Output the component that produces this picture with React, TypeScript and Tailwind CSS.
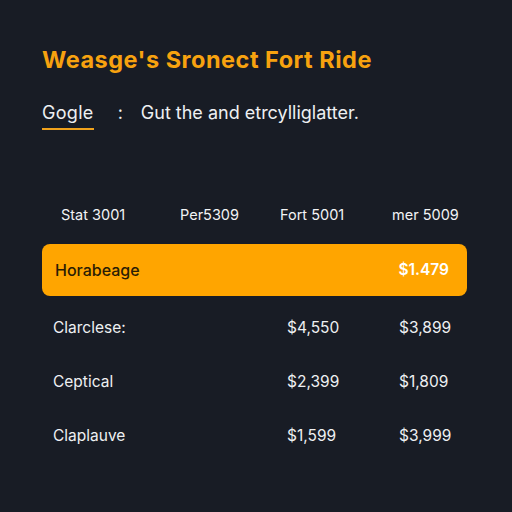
import React from "react";

const rows = [
  { name: "Clarclese:", a: "$4,550", b: "$3,899" },
  { name: "Ceptical", a: "$2,399", b: "$1,809" },
  { name: "Claplauve", a: "$1,599", b: "$3,999" },
];

export default function App() {
  return (
    <div
      className="w-[512px] h-[512px] bg-[#181c25] text-white overflow-hidden"
      style={{ fontFamily: "Inter, 'Noto Sans', sans-serif" }}
    >
      <div className="pt-[45px] px-[42px]">
        <h1 className="text-[23.5px] font-bold text-[#f7a20f] leading-[30px] tracking-[0.5px] whitespace-nowrap">
          Weasge's Sronect Fort Ride
        </h1>
        <div className="mt-[26px] flex items-center text-[18px] leading-[24px] text-[#eef0f2]">
          <span className="border-b-2 border-[#f0a21c] pb-[3px] tracking-[0.3px]">Gogle</span>
          <span className="ml-[24px] pb-[5px]">:</span>
          <span className="ml-[18px] pb-[5px]">Gut the and etrcylliglatter.</span>
        </div>
      </div>

      <div className="mt-[75px] px-[42px]">
        <div className="grid grid-cols-[119px_100px_112px_1fr] text-[14.5px] leading-[20px] text-[#f2f3f5] pl-[19px] whitespace-nowrap">
          <span>Stat 3001</span>
          <span>Per5309</span>
          <span>Fort 5001</span>
          <span>mer 5009</span>
        </div>
        <div className="mt-[19px] mr-[3px] h-[52px] rounded-[8px] bg-[#ffa500] flex items-center justify-between pl-[13px] pr-[18px]">
          <span className="text-[16px] font-medium text-[#2a1d05]">Horabeage</span>
          <span className="text-[15.5px] font-semibold text-white">$1.479</span>
        </div>
        <div className="flex flex-col">
          {rows.map((r) => (
            <div key={r.name} className="h-[54px] flex items-center text-[15.5px] text-[#eef0f2] pl-[11px] first:mt-[5px]">
              <span className="w-[234px]">{r.name}</span>
              <span className="w-[112px]">{r.a}</span>
              <span>{r.b}</span>
            </div>
          ))}
        </div>
      </div>
    </div>
  );
}
